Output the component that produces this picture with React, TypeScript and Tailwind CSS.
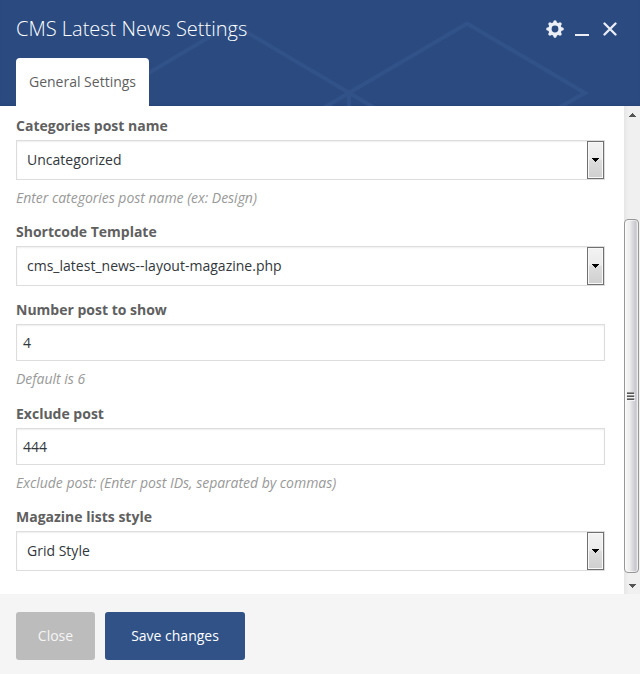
import type { ReactNode } from "react";

function GearIcon() {
  return (
    <svg width="18" height="18" viewBox="-9 -9 18 18" fill="#ebeef5">
      <path
        fillRule="evenodd"
        d="M-6.7 0a6.7 6.7 0 1 0 13.4 0a6.7 6.7 0 1 0 -13.4 0zM-3.4 0a3.4 3.4 0 1 1 6.8 0a3.4 3.4 0 1 1 -6.8 0z"
      />
      {[0, 45, 90, 135, 180, 225, 270, 315].map((angle) => (
        <path key={angle} d="M-2.1 -6L-1.3 -8.3Q0 -9.3 1.3 -8.3L2.1 -6z" transform={`rotate(${angle})`} />
      ))}
    </svg>
  );
}

function Header() {
  return (
    <header className="relative flex h-[106px] shrink-0 flex-col justify-between bg-[#2b4b80] px-4 shadow-[inset_0_-2px_2px_-1px_#27467a]">
      <svg className="absolute inset-0" width="640" height="106" fill="none" stroke="#315288" strokeWidth="4">
        <path d="M92 106L115 93L232 23.5L373 107M325 107L467 23.5L585 93L560 107M349 93V106" />
      </svg>
      <div className="relative flex h-[58px] items-center justify-between pr-[7px]">
        <h1 className="text-[20px] font-light leading-7 text-white">CMS Latest News Settings</h1>
        <div className="flex items-center">
          <button aria-label="Settings">
            <GearIcon />
          </button>
          <button aria-label="Minimize" className="ml-[11px] mt-[12px] h-0.5 w-3.5 bg-[#ebeef5]" />
          <button aria-label="Close panel" className="ml-[14px]">
            <svg width="14" height="14" fill="none" stroke="#ebeef5" strokeWidth="2.3" strokeLinecap="round">
              <path d="M1.5 1.5L12.5 12.5M12.5 1.5L1.5 12.5" />
            </svg>
          </button>
        </div>
      </div>
      <nav className="relative flex">
        <button className="h-12 w-[133px] rounded-t bg-white pb-0.5 text-[14px] text-[#5f5f5f]">General Settings</button>
      </nav>
    </header>
  );
}

function Field({ label, help, children }: { label: string; help?: string; children: ReactNode }) {
  return (
    <div>
      <div className="mb-1 text-[14px] font-bold leading-5 text-[#606060]">{label}</div>
      {children}
      {help && <p className="mt-2 text-[14px] italic leading-5 tracking-[-0.025px] text-[#999999]">{help}</p>}
    </div>
  );
}

function Select({ value }: { value: string }) {
  return (
    <div className="flex h-10 w-[589px] items-center justify-between border border-[#dddddd] bg-white pl-2.5 text-[14px] text-[#32373c] shadow-[inset_0_1px_2px_rgba(0,0,0,0.07)]">
      <span className="pb-0.5 tracking-[0.01px]">{value}</span>
      <span className="flex h-[38px] w-[17px] items-center justify-center border border-[#707070] bg-[linear-gradient(#f2f2f2_0%,#ebebeb_48%,#dddddd_50%,#cfcfcf_100%)] shadow-[inset_0_0_0_1px_#f8f8f8]">
        <svg width="7" height="4" shapeRendering="crispEdges">
          <path d="M0 0h7v1H6v1H5v1H4v1H3V3H2V2H1V1H0z" fill="#000000" />
        </svg>
      </span>
    </div>
  );
}

function TextInput({ value }: { value: string }) {
  return (
    <input
      readOnly
      value={value}
      className="block h-[37px] w-[589px] border border-[#dddddd] bg-white px-1.5 text-[14px] text-[#32373c] shadow-[inset_0_1px_2px_rgba(0,0,0,0.07)] outline-none"
    />
  );
}

function Scrollbar() {
  return (
    <div className="flex w-4 shrink-0 flex-col bg-[linear-gradient(90deg,#e6e6e6,#f0f0f0_30%,#f0f0f0)]">
      <div className="flex h-[17px] items-center justify-center">
        <svg width="7" height="4" shapeRendering="crispEdges">
          <path d="M3 0h1v1h1v1h1v1h1v1H0V3h1V2h1V1h1z" fill="#555555" />
        </svg>
      </div>
      <div className="mt-24 flex h-[354px] w-[15px] items-center justify-center rounded-sm border border-[#979797] bg-[linear-gradient(90deg,#f8f8f8_0%,#eeeeef_35%,#dcdce0_55%,#c8c8ce_80%,#dedee1_100%)] pr-px shadow-[inset_0_0_0_1px_#ffffff80]">
        <svg width="8" height="9" shapeRendering="crispEdges">
          <path d="M0 1h7v1H0zM0 4h7v1H0zM0 7h7v1H0z" fill="#565656" />
          <path d="M0 0h7v1H0zM0 3h7v1H0zM0 6h7v1H0z" fill="#969696" />
          <path d="M1 2h7v1H1zM1 5h7v1H1zM1 8h7v1H1z" fill="#f4f4f4" />
        </svg>
      </div>
      <div className="flex flex-1 items-center justify-center pt-1">
        <svg width="7" height="4" shapeRendering="crispEdges">
          <path d="M0 0h7v1H6v1H5v1H4v1H3V3H2V2H1V1H0z" fill="#555555" />
        </svg>
      </div>
    </div>
  );
}

export default function App() {
  return (
    <div className="flex h-[674px] w-[640px] flex-col overflow-hidden bg-white font-['Open_Sans',sans-serif]">
      <Header />
      <div className="flex h-[488px] shrink-0 justify-between">
        <main className="flex flex-col gap-3.5 pl-4 pt-2.5">
          <Field label="Categories post name" help="Enter categories post name (ex: Design)">
            <Select value="Uncategorized" />
          </Field>
          <Field label="Shortcode Template">
            <Select value="cms_latest_news--layout-magazine.php" />
          </Field>
          <Field label="Number post to show" help="Default is 6">
            <TextInput value="4" />
          </Field>
          <div className="pt-px">
            <Field label="Exclude post" help="Exclude post: (Enter post IDs, separated by commas)">
              <TextInput value="444" />
            </Field>
          </div>
          <Field label="Magazine lists style">
            <Select value="Grid Style" />
          </Field>
        </main>
        <Scrollbar />
      </div>
      <footer className="flex h-20 shrink-0 items-start gap-2.5 bg-[#f5f5f5] px-4 pt-[18px]">
        <button className="h-12 w-[79px] rounded-[3px] bg-[#bcbcbc] pb-0.5 text-[14px] text-[#f5f5f5]">Close</button>
        <button className="h-12 w-[140px] rounded-[3px] bg-[#305287] pb-0.5 text-[14px] text-white">Save changes</button>
      </footer>
    </div>
  );
}
